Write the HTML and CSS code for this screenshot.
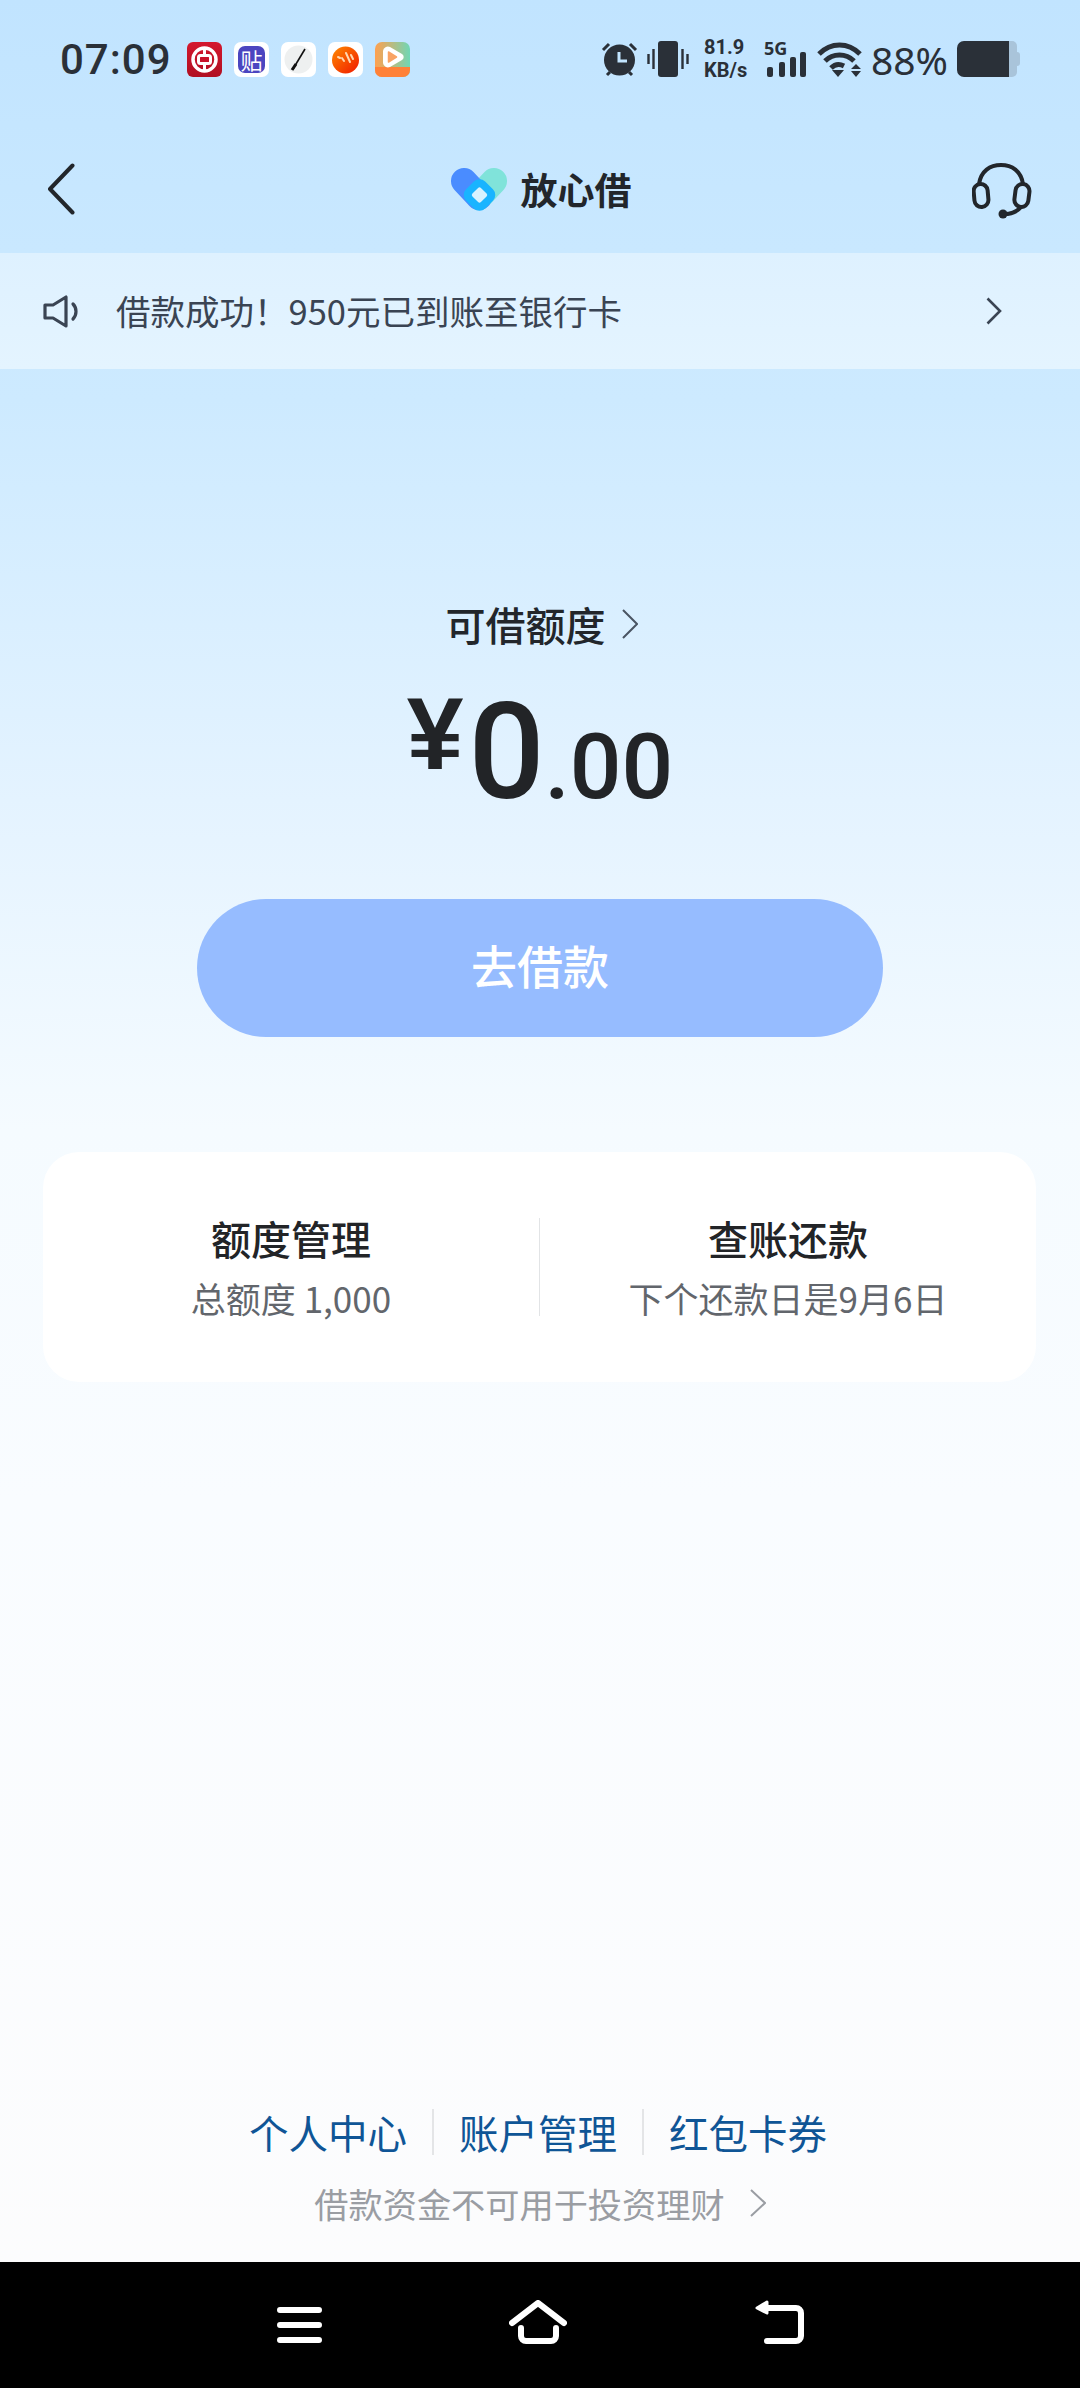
FILE: index.html
```html
<!DOCTYPE html>
<html lang="zh-CN">
<head>
    <meta charset="UTF-8">
    <meta name="viewport" content="width=device-width, initial-scale=1.0">
    <title>放心借</title>
    <link rel="stylesheet" href="styles.css">
</head>
<body>

<div class="page">
    <!-- Phone status bar -->
    <div class="status">
        <div class="status-left">
            <span class="time">07:09</span>
            <svg class="app-icon" viewBox="0 0 35 35"><defs><linearGradient id="bankBg" x1="0" y1="0" x2="0" y2="1"><stop offset="0" stop-color="#d4182e"/><stop offset="1" stop-color="#b00f22"/></linearGradient></defs><rect width="35" height="35" rx="6" fill="url(#bankBg)"/><circle cx="17.5" cy="17.5" r="11.5" fill="none" stroke="#fff" stroke-width="3.5"/><path d="M17.5 6v23" stroke="#fff" stroke-width="3"/><rect x="11.5" y="13.500" width="12" height="8" rx="2" fill="#c8132a" stroke="#fff" stroke-width="3"/></svg>
            <span class="app-icon tie"><span class="tie-inner">贴</span></span>
            <svg class="app-icon" viewBox="0 0 35 35"><rect width="35" height="35" rx="7" fill="#fff"/><circle cx="17.5" cy="17.5" r="14" fill="#eef0f0"/><path d="M24 7L12 27" stroke="#111" stroke-width="1.6"/><path d="M15 22L11 28" stroke="#111" stroke-width="3"/></svg>
            <svg class="app-icon" viewBox="0 0 35 35"><defs><linearGradient id="orangeDot" x1="0" y1="0" x2="1" y2="1"><stop offset="0" stop-color="#ff8a00"/><stop offset="1" stop-color="#f01800"/></linearGradient></defs><rect width="35" height="35" rx="7" fill="#fff"/><circle cx="17.5" cy="18" r="13.5" fill="url(#orangeDot)"/><path d="M10 15l2 1M14 16l2 3M18 11l4 9M23 13l2 4" stroke="#ffd9b0" stroke-width="2" stroke-linecap="round"/></svg>
            <svg class="app-icon" viewBox="0 0 35 35"><defs><linearGradient id="playBg" x1="0" y1="0" x2="1" y2="0"><stop offset="0" stop-color="#ffa04f"/><stop offset="1" stop-color="#6fd7b5"/></linearGradient></defs><rect width="35" height="35" rx="7" fill="url(#playBg)"/><path d="M0 25H35V28a7 7 0 0 1-7 7H7a7 7 0 0 1-7-7Z" fill="#ff8138"/><path d="M8 9a5 5 0 0 1 7-4l12 7a3.500 3.500 0 0 1 0 6l-12 7a5 5 0 0 1-7-4Z" fill="#fff"/><path d="M13.500 10l8 5-8 5Z" fill="#f9a365" stroke="#f9a365" stroke-width="1.500" stroke-linejoin="round"/></svg>
        </div>
        <div class="status-right">
            <svg class="ic-alarm" viewBox="0 0 37 36"><circle cx="18.5" cy="19" r="15.5" fill="#2a3038"/><path d="M2 9l6-6M35 9l-6-6M6 34l3-3M31 34l-3-3" stroke="#2a3038" stroke-width="3"/><path d="M18 11v9h8" fill="none" stroke="#c2e5ff" stroke-width="3"/></svg>
            <svg class="ic-vibrate" viewBox="0 0 42 36"><rect x="11" width="20" height="36" rx="3" fill="#2a3038"/><path d="M1.5 13v10M6.500 8v20M35.500 8v20M40.500 13v10" stroke="#2a3038" stroke-width="2.4"/></svg>
            <div class="speed"><span>81.9</span><span>KB/s</span></div>
            <div class="signal">
                <span class="net">5G</span>
                <svg class="bars" viewBox="0 0 40 25"><rect y="15" width="6" height="10" rx="2" fill="#2a3038"/><rect x="12" y="10" width="6" height="15" rx="2" fill="#2a3038"/><rect x="23" y="5" width="6" height="20" rx="2" fill="#2a3038"/><rect x="33" width="6" height="25" rx="2" fill="#2a3038"/></svg>
            </div>
            <svg class="ic-wifi" viewBox="0 0 45 36"><g fill="none" stroke="#2a3038" stroke-width="5"><path d="M2 13C14 1 31 1 43 13"/><path d="M8 20C16 12 29 12 37 20"/><path d="M14 27C18 23 23 23 27 25"/></g><path d="M15 29h12l-6 7Z" fill="#2a3038"/><path d="M39 23l5 5H34ZM34 30h10l-5 6Z" fill="#2a3038"/></svg>
            <span class="percent">88%</span>
            <svg class="ic-battery" viewBox="0 0 63 36"><path d="M52 0h3a5 5 0 0 1 5 5v26a5 5 0 0 1-5 5h-3Z" fill="#a9c4da"/><path d="M58 11h2a3 3 0 0 1 3 3v8a3 3 0 0 1-3 3h-2Z" fill="#a9c4da"/><path d="M7 0H52V36H7a7 7 0 0 1-7-7V7a7 7 0 0 1 7-7Z" fill="#2a3038"/></svg>
        </div>
    </div>

    <!-- Title bar -->
    <div class="topbar">
        <svg class="ic-back" viewBox="0 0 28 52"><path d="M25.500 2.500L3 26l22.500 23.500" fill="none" stroke="#22262b" stroke-width="4" stroke-linecap="round" stroke-linejoin="round"/></svg>
        <div class="brand">
            <svg class="brand-mark" viewBox="0 0 56 43"><path d="M43 13L28 29" stroke="#80e3da" stroke-width="26" stroke-linecap="round"/><path d="M13 13L28 29" stroke="#4a8cff" stroke-width="26" stroke-linecap="round"/><rect x="15" y="13.500" width="27" height="27" rx="8" transform="rotate(45 28.500 27)" fill="#19b4ff"/><rect x="22.500" y="21" width="12" height="12" rx="2" transform="rotate(45 28.500 27)" fill="#d8f2ff"/></svg>
            <span class="brand-name">放心借</span>
        </div>
        <svg class="ic-service" viewBox="0 0 60 56"><g fill="none" stroke="#22262b" stroke-width="4" stroke-linecap="round"><path d="M7 21C9 8 18 2 29 2s20 6 22 19"/><rect x="2" y="21" width="14" height="23" rx="7" transform="rotate(-5 9 32)"/><rect x="43" y="21" width="14" height="23" rx="7" transform="rotate(7 50 32)"/><path d="M49 44c-4 5-10 7-17 7"/></g><circle cx="31" cy="51" r="4.500" fill="#22262b"/></svg>
    </div>

    <!-- Notice -->
    <div class="notice">
        <svg class="ic-speaker" viewBox="0 0 36 33"><g fill="none" stroke="#3a4453" stroke-width="3.200" stroke-linejoin="round" stroke-linecap="round"><path d="M2 10H10L23 2V31L10 23H2Z"/><path d="M30 9C34 13 34 20 30 24"/></g></svg>
        <span class="notice-text">借款成功！950元已到账至银行卡</span>
        <svg class="ic-next" viewBox="0 0 16 28"><path d="M1.500 1.500L14 14 1.500 26.500" fill="none" stroke="#3a4453" stroke-width="2.600"/></svg>
    </div>

    <!-- Credit amount -->
    <div class="credit">
        <div class="credit-label">
            <span>可借额度</span>
            <svg class="ic-label-next" viewBox="0 0 16 30"><path d="M1 1L15 15 1 29" fill="none" stroke="#4a5563" stroke-width="2"/></svg>
        </div>
        <div class="amount">
            <span class="amount-sign">¥</span><span class="amount-int">0</span><span class="amount-dec">.00</span>
        </div>
        <div class="loan-btn">去借款</div>
    </div>

    <div class="card">
        <div class="card-cell">
            <div class="card-title">额度管理</div>
            <div class="card-sub">总额度 1,000</div>
        </div>
        <div class="card-line"></div>
        <div class="card-cell">
            <div class="card-title">查账还款</div>
            <div class="card-sub">下个还款日是9月6日</div>
        </div>
    </div>

    <!-- Bottom links -->
    <div class="links">
        <div class="link-row">
            <span>个人中心</span>
            <i class="link-line"></i>
            <span>账户管理</span>
            <i class="link-line"></i>
            <span>红包卡券</span>
        </div>
        <div class="link-note">
            <span>借款资金不可用于投资理财</span>
            <svg class="ic-note-next" viewBox="0 0 16 28"><path d="M1 1L15 14 1 27" fill="none" stroke="#9a9da3" stroke-width="2"/></svg>
        </div>
    </div>

    <!-- System navigation -->
    <div class="sysbar">
        <svg class="ic-menu" viewBox="0 0 45 36"><path d="M3 3H42M3 18H42M3 33H42" stroke="#fff" stroke-width="6" stroke-linecap="round"/></svg>
        <svg class="ic-home" viewBox="0 0 58 44"><g fill="none" stroke="#fff" stroke-width="6" stroke-linecap="round" stroke-linejoin="round"><path d="M3 23L29 3 55 23"/><path d="M12 28V36a5 5 0 0 0 5 5H42a5 5 0 0 0 5-5V28"/></g></svg>
        <svg class="ic-return" viewBox="0 0 50 44"><path d="M13 8H42a5 5 0 0 1 5 5V36a5 5 0 0 1-5 5H13" fill="none" stroke="#fff" stroke-width="6" stroke-linecap="round"/><path d="M13 2L3 8l10 5Z" fill="#fff" stroke="#fff" stroke-width="3" stroke-linejoin="round"/></svg>
    </div>
</div>

</body>
</html>
```

FILE: styles.css
```css
body {
    margin: 0;
    font-family: "Noto Sans CJK SC", "Noto Sans", sans-serif;
    color: #22262b;
}
.page {
    width: 1080px;
    height: 2388px;
    display: flex;
    flex-direction: column;
    overflow: hidden;
    background: linear-gradient(#c1e4ff 0, #c9e8ff 250px, #cdeaff 400px, #e4f3ff 800px, #f5fbff 1130px, #f9fcff 1500px, #fcfcfd 2262px);
}

/* Status bar */
.status {
    height: 118px;
    flex: none;
    display: flex;
    justify-content: space-between;
    align-items: center;
    padding: 0 60px;
    box-sizing: border-box;
    color: #2a3038;
}
.status-left, .status-right {
    display: flex;
    align-items: center;
}
.time {
    font-family: Roboto, sans-serif;
    font-weight: 500;
    font-size: 42px;
    width: 127px;
    letter-spacing: 1px;
}
.app-icon {
    width: 35px;
    height: 35px;
    margin-right: 12px;
}
.tie {
    display: flex;
    align-items: center;
    justify-content: center;
    background: #fff;
    border-radius: 7px;
}
.tie-inner {
    width: 27px;
    height: 27px;
    line-height: 26px;
    text-align: center;
    border-radius: 7px;
    background: #4b45c0;
    color: #fff;
    font-size: 22px;
}
.ic-alarm { width: 37px; height: 36px; }
.ic-vibrate { width: 42px; height: 36px; margin-left: 9px; }
.speed {
    display: flex;
    flex-direction: column;
    margin-left: 15px;
    width: 60px;
    font-family: Roboto, sans-serif;
    font-weight: 700;
    font-size: 20px;
    line-height: 23.500px;
}
.signal {
    width: 43px;
    height: 36px;
    position: relative;
}
.net {
    position: absolute;
    left: 0;
    top: -2px;
    font-family: "Noto Sans", sans-serif;
    font-weight: 700;
    font-size: 18px;
    line-height: 18px;
}
.bars {
    position: absolute;
    left: 3px;
    top: 11px;
    width: 40px;
    height: 25px;
}
.ic-wifi { width: 45px; height: 36px; margin-left: 10px; }
.percent {
    font-family: "Noto Sans", sans-serif;
    font-size: 39px;
    margin-left: 9px;
    width: 86px;
}
.ic-battery { width: 63px; height: 36px; }

/* Title bar */
.topbar {
    height: 135px;
    flex: none;
    box-sizing: border-box;
    padding: 45px 48px 0 47px;
    display: grid;
    grid-template-columns: 1fr auto 1fr;
    align-items: start;
}
.ic-back { width: 28px; height: 52px; }
.brand {
    display: flex;
    align-items: center;
    height: 43px;
    margin: 5px 0 0 3px;
}
.brand-mark { width: 56px; height: 43px; }
.brand-name {
    margin-left: 14px;
    font-size: 37px;
    font-weight: 700;
    line-height: 43px;
}
.ic-service { width: 60px; height: 56px; justify-self: end; }

/* Notice */
.notice {
    height: 116px;
    flex: none;
    box-sizing: border-box;
    padding: 0 78px 0 43px;
    display: flex;
    align-items: center;
    background: linear-gradient(#def1ff, #e4f4ff);
    color: #3a4453;
}
.ic-speaker { width: 36px; height: 33px; }
.notice-text {
    flex: 1;
    margin-left: 37px;
    padding-bottom: 2px;
    font-size: 34.500px;
}
.ic-next { width: 16px; height: 28px; }

/* Credit */
.credit {
    display: flex;
    flex-direction: column;
    align-items: center;
    padding-top: 232px;
}
.credit-label {
    display: flex;
    align-items: center;
    font-size: 40px;
    font-weight: 500;
    line-height: 46px;
    margin-left: 3px;
}
.ic-label-next { width: 16px; height: 30px; margin-left: 16px; }
.amount {
    display: flex;
    align-items: baseline;
    height: 170px;
    margin-top: 21px;
    font-family: Roboto, sans-serif;
    font-weight: 500;
    line-height: 170px;
    color: #222427;
}
.amount-sign {
    font-family: "Liberation Sans", sans-serif;
    font-weight: 700;
    font-size: 102px;
    position: relative;
    top: -29px;
}
.amount-int { font-size: 134px; margin-left: 5px; }
.amount-dec { font-size: 91px; }
.loan-btn {
    width: 686px;
    height: 138px;
    margin-top: 61px;
    border-radius: 69px;
    background: #96bcff;
    color: #fff;
    font-size: 46px;
    font-weight: 500;
    line-height: 130px;
    text-align: center;
}

/* Card */
.card {
    height: 230px;
    flex: none;
    margin: 115px 44px 0 43px;
    border-radius: 36px;
    background: #fff;
    display: flex;
    align-items: center;
}
.card-cell {
    flex: 1;
    text-align: center;
}
.card-line {
    width: 1px;
    height: 98px;
    background: #e2e4e6;
}
.card-title {
    font-size: 40px;
    font-weight: 500;
    line-height: 52px;
    margin-top: -2px;
    color: #222427;
}
.card-sub {
    font-size: 35px;
    line-height: 46px;
    margin-top: 11px;
    color: #62666c;
}

/* Links */
.links {
    margin-top: auto;
    padding-bottom: 37px;
}
.link-row {
    display: flex;
    justify-content: center;
    align-items: center;
    gap: 25px;
    padding-right: 4px;
    font-size: 39.500px;
    line-height: 46px;
    color: #0f5596;
}
.link-line {
    width: 2px;
    height: 46px;
    background: #e4e5e7;
}
.link-note {
    display: flex;
    justify-content: center;
    align-items: center;
    margin-top: 26px;
    font-size: 34.200px;
    line-height: 44px;
    color: #9a9da3;
}
.ic-note-next { width: 16px; height: 28px; margin-left: 25px; }

/* System navigation */
.sysbar {
    height: 126px;
    flex: none;
    background: #000;
    box-sizing: border-box;
    padding: 38px 276px 0 277px;
    display: flex;
    justify-content: space-between;
    align-items: flex-start;
}
.ic-menu { width: 45px; height: 36px; margin-top: 7px; }
.ic-home { width: 58px; height: 44px; }
.ic-return { width: 50px; height: 44px; }
```
